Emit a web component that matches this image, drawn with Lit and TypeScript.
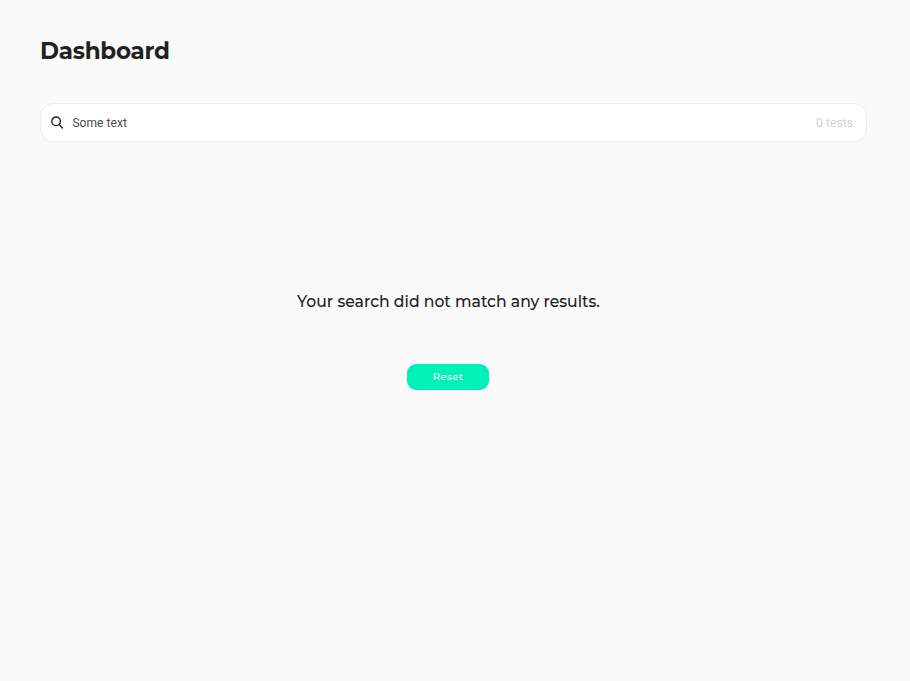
import { LitElement, html, css } from "lit";
import { customElement, property } from "lit/decorators.js";

@customElement("search-bar")
class SearchBar extends LitElement {
  @property() value = "";
  @property({ type: Number }) count = 0;

  static styles = css`
    :host {
      display: flex;
      align-items: center;
      box-sizing: border-box;
      height: 39px;
      padding: 0 13px 0 10px;
      border: 1px solid #eeeeee;
      border-radius: 13px;
      background: #fff;
      font: 12px/16px Roboto, sans-serif;
      color: #4a4a4a;
    }
    .icon {
      width: 13px;
      height: 13px;
      margin-right: 8.4px;
      fill: none;
      stroke: #222;
      stroke-width: 1.4;
      stroke-linecap: round;
    }
    .value {
      flex: 1;
      letter-spacing: 0.07px;
    }
    .count {
      color: #d2d2d2;
      letter-spacing: 0.1px;
    }
  `;

  render() {
    return html`
      <svg class="icon" viewBox="0 0 13 13">
        <circle cx="5.1" cy="5.3" r="4.3"></circle>
        <path d="M8.2 8.5 11.4 11.9"></path>
      </svg>
      <span class="value">${this.value}</span>
      <span class="count">${this.count} tests</span>
    `;
  }
}

@customElement("app-root")
class AppRoot extends LitElement {
  static styles = css`
    :host {
      display: block;
      box-sizing: border-box;
      height: 100vh;
      padding: 36px 43px 0 40px;
      background: #fafafa;
      color: #212121;
      font-family: Montserrat, Inter, sans-serif;
    }
    .title {
      margin: 0 0 37px;
      font-size: 23px;
      line-height: 30px;
      font-weight: 700;
      letter-spacing: -0.25px;
    }
    .empty {
      display: flex;
      flex-direction: column;
      align-items: center;
      padding: 147px 11px 0 0;
    }
    .message {
      margin: 0 0 50px;
      padding-left: 1px;
      font-size: 15.65px;
      line-height: 25px;
      font-weight: 500;
      white-space: nowrap;
    }
    .reset {
      width: 82px;
      height: 26px;
      padding: 0;
      border: 0;
      border-radius: 9px;
      background: #00f0b5;
      color: #fff;
      font: 500 10px/26px Montserrat, Inter, sans-serif;
      letter-spacing: 0.4px;
    }
  `;

  render() {
    return html`
      <h1 class="title">Dashboard</h1>
      <search-bar value="Some text" .count=${0}></search-bar>
      <section class="empty">
        <p class="message">Your search did not match any results.</p>
        <button class="reset">Reset</button>
      </section>
    `;
  }
}
